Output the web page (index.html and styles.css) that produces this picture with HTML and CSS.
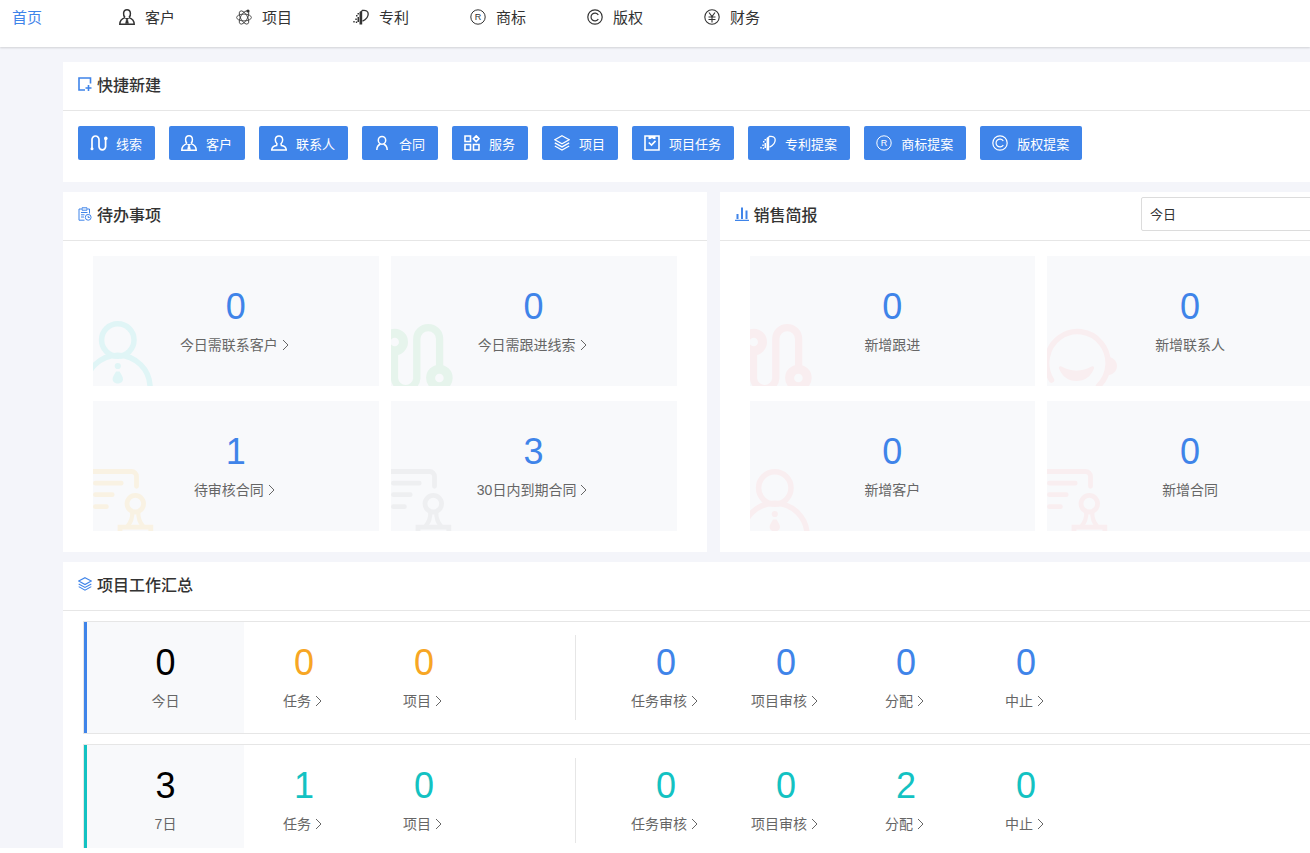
FILE: index.html
```html
<!DOCTYPE html>
<html lang="zh-CN">
<head>
<meta charset="utf-8">
<title>首页</title>
<link rel="stylesheet" href="styles.css">
</head>
<body>
<svg class="sprite" aria-hidden="true">
  <symbol id="i-customer" viewBox="0 0 16 16"><path d="M6 8.600C4.800 7.400 4.400 6 4.600 4.200 4.800 2 6.200.8 8 .8s3.200 1.200 3.400 3.400c.2 1.800-.2 3.200-1.400 4.400M6 8.600C3 9.600.8 11.200.8 15.200h14.400c0-4-2.200-5.600-5.200-6.600" fill="none" stroke="currentColor" stroke-width="1.500"/><path d="M6 9l2 2.300L10 9M7.300 11h1.400l.8 3.400h-3z" fill="currentColor" stroke="currentColor" stroke-width=".5"/></symbol>
  <symbol id="i-contact" viewBox="0 0 16 16"><path d="M6 8.800C4.800 7.600 4.200 6 4.400 4.200 4.600 2 6.200.9 8 .9s3.400 1.100 3.600 3.300c.2 1.800-.4 3.400-1.600 4.600l.4 1.700c3 .5 4.800 1.700 4.900 4.600H.7c.1-2.900 1.900-4.100 4.900-4.600z" fill="none" stroke="currentColor" stroke-width="1.500"/></symbol>
  <symbol id="i-atom" viewBox="0 0 16 16"><g fill="none" stroke="currentColor" stroke-width=".8"><ellipse cx="8" cy="8.500" rx="7.400" ry="3.400"/><ellipse cx="8" cy="8.500" rx="7.400" ry="3.400" transform="rotate(60 8 8.500)"/><ellipse cx="8" cy="8.500" rx="7.400" ry="3.400" transform="rotate(120 8 8.500)"/></g><circle cx="12" cy="2" r="1.600" fill="currentColor"/></symbol>
  <symbol id="i-patent" viewBox="0 0 16 16"><path d="M6.500 15.500V3l2.700-2v14.500z" fill="currentColor"/><path d="M9 1.500c4-.8 6.300.8 6.200 3.500-.1 3-2.600 5.800-5.700 7.200" fill="none" stroke="currentColor" stroke-width="1.300"/><path d="M4.500 4H6v1.500H4.500zM3 6h1.500v1.500H3zM4.500 8H6v5H4.500zM2.300 9.500h1.500V11H2.300zM.3 12h1.400v1.400H.3zM2.800 12.500h1.400v1.400H2.800z" fill="currentColor"/></symbol>
  <symbol id="i-copy" viewBox="0 0 16 16"><g fill="none" stroke="currentColor" stroke-width="1.200"><circle cx="8" cy="8" r="7.200"/><path d="M11.300 6a3.900 3.900 0 1 0 0 4"/></g></symbol>
  <symbol id="i-yuan" viewBox="0 0 16 16"><g fill="none" stroke="currentColor" stroke-width="1.100"><circle cx="8" cy="8" r="7.200"/><path d="M5 3.500l3 4 3-4M8 7.500v6M4.500 8h7M4.500 10.500h7"/></g></symbol>
  <symbol id="i-route" viewBox="0 0 18 16"><path d="M2 14V4.500a3.500 3.500 0 0 1 7 0v7a3.300 3.300 0 0 0 6.600 0V4" fill="none" stroke="currentColor" stroke-width="1.700"/><circle cx="2" cy="13.700" r="1.500" fill="currentColor"/><circle cx="15.800" cy="3.400" r="1.800" fill="currentColor"/></symbol>
  <symbol id="i-sign" viewBox="0 0 16 16"><g fill="none" stroke="currentColor" stroke-width="1.500"><ellipse cx="8" cy="5.300" rx="3.700" ry="3.900"/><path d="M6.500 9c-2.200 1-3.700 3-3.700 6M9.500 9c2.200 1 3.700 3 3.700 6"/></g></symbol>
  <symbol id="i-apps" viewBox="0 0 16 16"><g fill="none" stroke="currentColor" stroke-width="1.600"><path d="M1 1h5.500v5.500H1zM1 9.500h5.500V15H1zM9.500 9.500H15V15H9.500zM12.200.9L15 3.700l-2.800 2.800-2.800-2.800z"/></g></symbol>
  <symbol id="i-layers" viewBox="0 0 16 16"><g fill="none" stroke="currentColor" stroke-width="1.300"><path d="M8 .8l7.200 3.900L8 8.700.8 4.700zM.8 7.900L8 11.900l7.200-4M.8 11L8 15l7.200-4"/></g></symbol>
  <symbol id="i-task" viewBox="0 0 16 16"><path d="M1 1h14v14H1zM4.800 7.500l2.700 2.600 4-4.200" fill="none" stroke="currentColor" stroke-width="1.600"/><path d="M4.500 1h7v3h-2l-1.500-1-1.500 1h-2z" fill="currentColor"/></symbol>
  <symbol id="i-new" viewBox="0 0 14 14"><path d="M7 13H1V1h11.500v5.500M10.500 8v6M7.500 11h6" fill="none" stroke="currentColor" stroke-width="1.600"/></symbol>
  <symbol id="i-todo" viewBox="0 0 14 14"><g fill="none" stroke="currentColor"><path d="M6.500 13.200H1V2h2.500M9.500 2h2v4.500M4 .8h5v2.400H4zM3 5.500h6.500M3 7.800h3.500M3 10h3"/><circle cx="10.200" cy="10.300" r="2.900"/><path d="M10.200 8.800v1.700h1.500"/></g></symbol>
  <symbol id="i-bars" viewBox="0 0 14 14"><path d="M0 12.700h14v1.200H0zM1.500 7h2v5h-2zM6 .5h2V12H6zM10.500 3.500h2V12h-2z" fill="currentColor"/></symbol>
  <symbol id="i-next" viewBox="0 0 14 14"><path d="M5 2l5 5-5 5" fill="none" stroke="currentColor"/></symbol>
  <symbol id="m-person" viewBox="0 0 72 65"><g fill="none" stroke="currentColor" stroke-width="5.500"><circle cx="24.800" cy="19" r="16.200"/><circle cx="24.800" cy="66.500" r="32.300"/></g><circle cx="24.800" cy="45" r="3.100" fill="currentColor"/><path d="M23 50.500h3.600c1.500 3 3.400 5 3.400 7.500 0 3-2.600 4.500-5.200 4.500S19.600 61 19.600 58c0-2.500 1.900-4.500 3.400-7.500z" fill="currentColor"/></symbol>
  <symbol id="m-route" viewBox="0 0 72 65"><g fill="none" stroke="currentColor"><path d="M3.500 30v27.500a11.200 11.200 0 0 0 22.300 0V18a11.400 11.400 0 0 1 22.800 0v29" stroke-width="7.300"/><g stroke-width="9"><circle cx="3.700" cy="21" r="8.800"/><circle cx="48.400" cy="57" r="8.800"/></g></g></symbol>
  <symbol id="m-cert" viewBox="0 0 72 65"><g fill="none" stroke="currentColor" stroke-linecap="round" stroke-width="4.800"><path d="M-4 5.500h42.500a5 5 0 0 1 5 5v9.800M2.400 17.200h25.800M2.400 28.700h16.800M2.400 40.700h11"/><circle cx="42.300" cy="37.700" r="8.300"/><path d="M39.300 46c.3 6-1 10-5 14.500M45.300 46c-.3 6 1 10 5 14.500" stroke-width="4.200"/><path d="M27 68v-6.800h30.800V68"/></g></symbol>
  <symbol id="m-face" viewBox="0 0 72 65"><path d="M4.500 59A30.700 31.500 0 1 1 51.500 65" fill="none" stroke="currentColor" stroke-width="5.500" stroke-linecap="round"/><path d="M59 35.500c6 0 11 4 11 9.500s-5 9.500-11 9.500z" fill="currentColor"/><path d="M14.500 45.500c9 5.500 21 5.500 30 0 2-.8 3 .3 2.500 2-3 8-9.500 12.500-17.500 12.500S15 55.500 12 47.500c-.5-1.700.5-2.800 2.500-2z" fill="currentColor"/></symbol>
</svg>

<div class="app">
  <nav class="nav">
    <a class="nav-item nav-home" href="#">首页</a>
    <a class="nav-item" href="#"><svg class="icon"><use href="#i-customer"/></svg>客户</a>
    <a class="nav-item" href="#"><svg class="icon"><use href="#i-atom"/></svg>项目</a>
    <a class="nav-item" href="#"><svg class="icon"><use href="#i-patent"/></svg>专利</a>
    <a class="nav-item" href="#"><svg class="icon" viewBox="0 0 16 16"><circle class="ring" cx="8" cy="8" r="7.200"/><text class="glyph" x="8" y="11">R</text></svg>商标</a>
    <a class="nav-item" href="#"><svg class="icon"><use href="#i-copy"/></svg>版权</a>
    <a class="nav-item" href="#"><svg class="icon"><use href="#i-yuan"/></svg>财务</a>
  </nav>

  <main class="main">
    <section class="panel">
      <header class="panel-head"><svg class="head-icon"><use href="#i-new"/></svg><h2>快捷新建</h2></header>
      <div class="actions">
        <button class="btn" type="button"><svg class="icon icon-wide"><use href="#i-route"/></svg>线索</button>
        <button class="btn" type="button"><svg class="icon"><use href="#i-customer"/></svg>客户</button>
        <button class="btn" type="button"><svg class="icon"><use href="#i-contact"/></svg>联系人</button>
        <button class="btn" type="button"><svg class="icon"><use href="#i-sign"/></svg>合同</button>
        <button class="btn" type="button"><svg class="icon"><use href="#i-apps"/></svg>服务</button>
        <button class="btn" type="button"><svg class="icon"><use href="#i-layers"/></svg>项目</button>
        <button class="btn" type="button"><svg class="icon"><use href="#i-task"/></svg>项目任务</button>
        <button class="btn" type="button"><svg class="icon"><use href="#i-patent"/></svg>专利提案</button>
        <button class="btn" type="button"><svg class="icon" viewBox="0 0 16 16"><circle class="ring" cx="8" cy="8" r="7.200"/><text class="glyph" x="8" y="11">R</text></svg>商标提案</button>
        <button class="btn" type="button"><svg class="icon"><use href="#i-copy"/></svg>版权提案</button>
      </div>
    </section>

    <div class="columns">
      <section class="panel">
        <header class="panel-head"><svg class="head-icon"><use href="#i-todo"/></svg><h2>待办事项</h2></header>
        <div class="cards">
          <a class="card" href="#"><svg class="mark cyan"><use href="#m-person"/></svg><span class="num blue">0</span><span class="label">今日需联系客户<svg class="next"><use href="#i-next"/></svg></span></a>
          <a class="card" href="#"><svg class="mark green"><use href="#m-route"/></svg><span class="num blue">0</span><span class="label">今日需跟进线索<svg class="next"><use href="#i-next"/></svg></span></a>
          <a class="card" href="#"><svg class="mark yellow"><use href="#m-cert"/></svg><span class="num blue">1</span><span class="label">待审核合同<svg class="next"><use href="#i-next"/></svg></span></a>
          <a class="card" href="#"><svg class="mark gray"><use href="#m-cert"/></svg><span class="num blue">3</span><span class="label">30日内到期合同<svg class="next"><use href="#i-next"/></svg></span></a>
        </div>
      </section>
      <section class="panel">
        <header class="panel-head"><svg class="head-icon"><use href="#i-bars"/></svg><h2>销售简报</h2>
          <select class="range" aria-label="时间范围"><option>今日</option><option>7日</option><option>30日</option></select>
        </header>
        <div class="cards">
          <div class="card"><svg class="mark pink"><use href="#m-route"/></svg><span class="num blue">0</span><span class="label">新增跟进</span></div>
          <div class="card"><svg class="mark pink"><use href="#m-face"/></svg><span class="num blue">0</span><span class="label">新增联系人</span></div>
          <div class="card"><svg class="mark mark-low pink"><use href="#m-person"/></svg><span class="num blue">0</span><span class="label">新增客户</span></div>
          <div class="card"><svg class="mark pink"><use href="#m-cert"/></svg><span class="num blue">0</span><span class="label">新增合同</span></div>
        </div>
      </section>
    </div>

    <section class="panel">
      <header class="panel-head"><svg class="head-icon"><use href="#i-layers"/></svg><h2>项目工作汇总</h2></header>
      <div class="rows">
        <div class="row">
          <div class="total total-blue"><span class="num">0</span><span class="label">今日</span></div>
          <div class="group group-first">
            <a class="cell" href="#"><span class="num orange">0</span><span class="label">任务<svg class="next"><use href="#i-next"/></svg></span></a>
            <a class="cell" href="#"><span class="num orange">0</span><span class="label">项目<svg class="next"><use href="#i-next"/></svg></span></a>
          </div>
          <div class="group group-rest">
            <a class="cell" href="#"><span class="num blue">0</span><span class="label">任务审核<svg class="next"><use href="#i-next"/></svg></span></a>
            <a class="cell" href="#"><span class="num blue">0</span><span class="label">项目审核<svg class="next"><use href="#i-next"/></svg></span></a>
            <a class="cell" href="#"><span class="num blue">0</span><span class="label">分配<svg class="next"><use href="#i-next"/></svg></span></a>
            <a class="cell" href="#"><span class="num blue">0</span><span class="label">中止<svg class="next"><use href="#i-next"/></svg></span></a>
          </div>
        </div>
        <div class="row">
          <div class="total total-teal"><span class="num">3</span><span class="label">7日</span></div>
          <div class="group group-first">
            <a class="cell" href="#"><span class="num teal">1</span><span class="label">任务<svg class="next"><use href="#i-next"/></svg></span></a>
            <a class="cell" href="#"><span class="num teal">0</span><span class="label">项目<svg class="next"><use href="#i-next"/></svg></span></a>
          </div>
          <div class="group group-rest">
            <a class="cell" href="#"><span class="num teal">0</span><span class="label">任务审核<svg class="next"><use href="#i-next"/></svg></span></a>
            <a class="cell" href="#"><span class="num teal">0</span><span class="label">项目审核<svg class="next"><use href="#i-next"/></svg></span></a>
            <a class="cell" href="#"><span class="num teal">2</span><span class="label">分配<svg class="next"><use href="#i-next"/></svg></span></a>
            <a class="cell" href="#"><span class="num teal">0</span><span class="label">中止<svg class="next"><use href="#i-next"/></svg></span></a>
          </div>
        </div>
      </div>
    </section>
  </main>
</div>
</body>
</html>
```

FILE: styles.css
```css
* { box-sizing: border-box; }
body {
  margin: 0;
  background: #fff;
  color: #333;
  font-family: "Liberation Sans", "Noto Sans CJK SC", sans-serif;
  font-size: 14px;
}
a { color: inherit; text-decoration: none; }
h2 { margin: 0; font-size: 16px; font-weight: 500; line-height: 24px; }
.sprite { position: absolute; width: 0; height: 0; }
.ring { fill: none; stroke: currentColor; }
.glyph {
  font: 9px "Liberation Sans", sans-serif;
  fill: currentColor;
  text-anchor: middle;
}

.app {
  height: calc(100vh - 5px);
  overflow: hidden;
  background: #f4f5fa;
}
.nav {
  display: flex;
  height: 47px;
  padding: 0 12px;
  background: #fff;
  box-shadow: 0 1px 2px rgba(0, 0, 0, 0.15);
}
.nav-item {
  display: flex;
  align-items: center;
  gap: 10px;
  width: 117px;
  height: 32px;
  font-size: 15px;
}
.nav-home { width: 107px; color: #3f84e9; }
.icon { width: 16px; height: 16px; flex: none; }
.icon-wide { width: 18px; }
.nav-item .icon { margin-top: 2px; }

/* the dashboard runs on past the right edge of the window */
.main {
  display: flex;
  flex-direction: column;
  gap: 10px;
  margin: 15px -53px 0 63px;
}
.panel { background: #fff; }
.panel-head {
  display: flex;
  align-items: center;
  gap: 5px;
  height: 49px;
  padding: 0 15px;
  border-bottom: 1px solid #e6e6e6;
}
.head-icon {
  width: 14px;
  height: 14px;
  flex: none;
  margin-bottom: 4px;
  color: #3f84e9;
}
.actions {
  display: flex;
  flex-wrap: wrap;
  gap: 14px;
  padding: 15px 15px 22px;
}
.btn {
  display: flex;
  align-items: center;
  gap: 9px;
  height: 34px;
  padding: 0 13px 0 12px;
  border: 0;
  border-radius: 2px;
  background: #3f84e9;
  color: #fff;
  font-family: inherit;
  font-size: 13px;
}
.btn .icon-wide { margin-right: -1px; }

.columns { display: grid; grid-template-columns: 1fr 1fr; gap: 13px; }
.range {
  width: 190px;
  height: 34px;
  margin: 0 17px 4px auto;
  padding: 0 8px;
  border: 1px solid #dcdcdc;
  border-radius: 2px;
  background: #fff;
  color: #333;
  font-family: inherit;
  font-size: 13px;
  appearance: none;
}
.cards {
  display: grid;
  grid-template-columns: 1fr 1fr;
  gap: 15px 12px;
  padding: 15px 30px 21px;
}
.card {
  position: relative;
  overflow: hidden;
  padding: 25px 0 29px;
  background: #f8f9fb;
}
.mark { position: absolute; left: 0; bottom: 0; width: 72px; height: 65px; }
.mark-low { bottom: -3px; }
.cyan { color: #e0f5f6; }
.green { color: #e6f4ec; }
.yellow { color: #f9f2e3; }
.gray { color: #eeeff1; }
.pink { color: #f9eef0; }

.num { display: block; font-size: 36px; line-height: 52px; text-align: center; }
.blue { color: #3f84e9; }
.orange { color: #f7a624; }
.teal { color: #13c2c2; }
.label {
  display: flex;
  align-items: center;
  justify-content: center;
  line-height: 24px;
  color: #666;
}
.next { width: 14px; height: 14px; flex: none; }

.rows { display: flex; flex-direction: column; gap: 10px; padding: 10px 20px; }
.row { display: flex; border: 1px solid #e6e6e6; }
.total {
  width: 160px;
  padding: 15px 0 20px;
  border-left: 3px solid;
  background: #f8f9fb;
}
.total .num { color: #000; }
.total-blue { border-color: #3f84e9; }
.total-teal { border-color: #13c2c2; }
.group { display: flex; margin: 13px 0; }
.group-first { width: 332px; border-right: 1px solid #e6e6e6; }
.group-rest { padding-left: 30px; }
.cell { width: 120px; padding-top: 2px; }
```
